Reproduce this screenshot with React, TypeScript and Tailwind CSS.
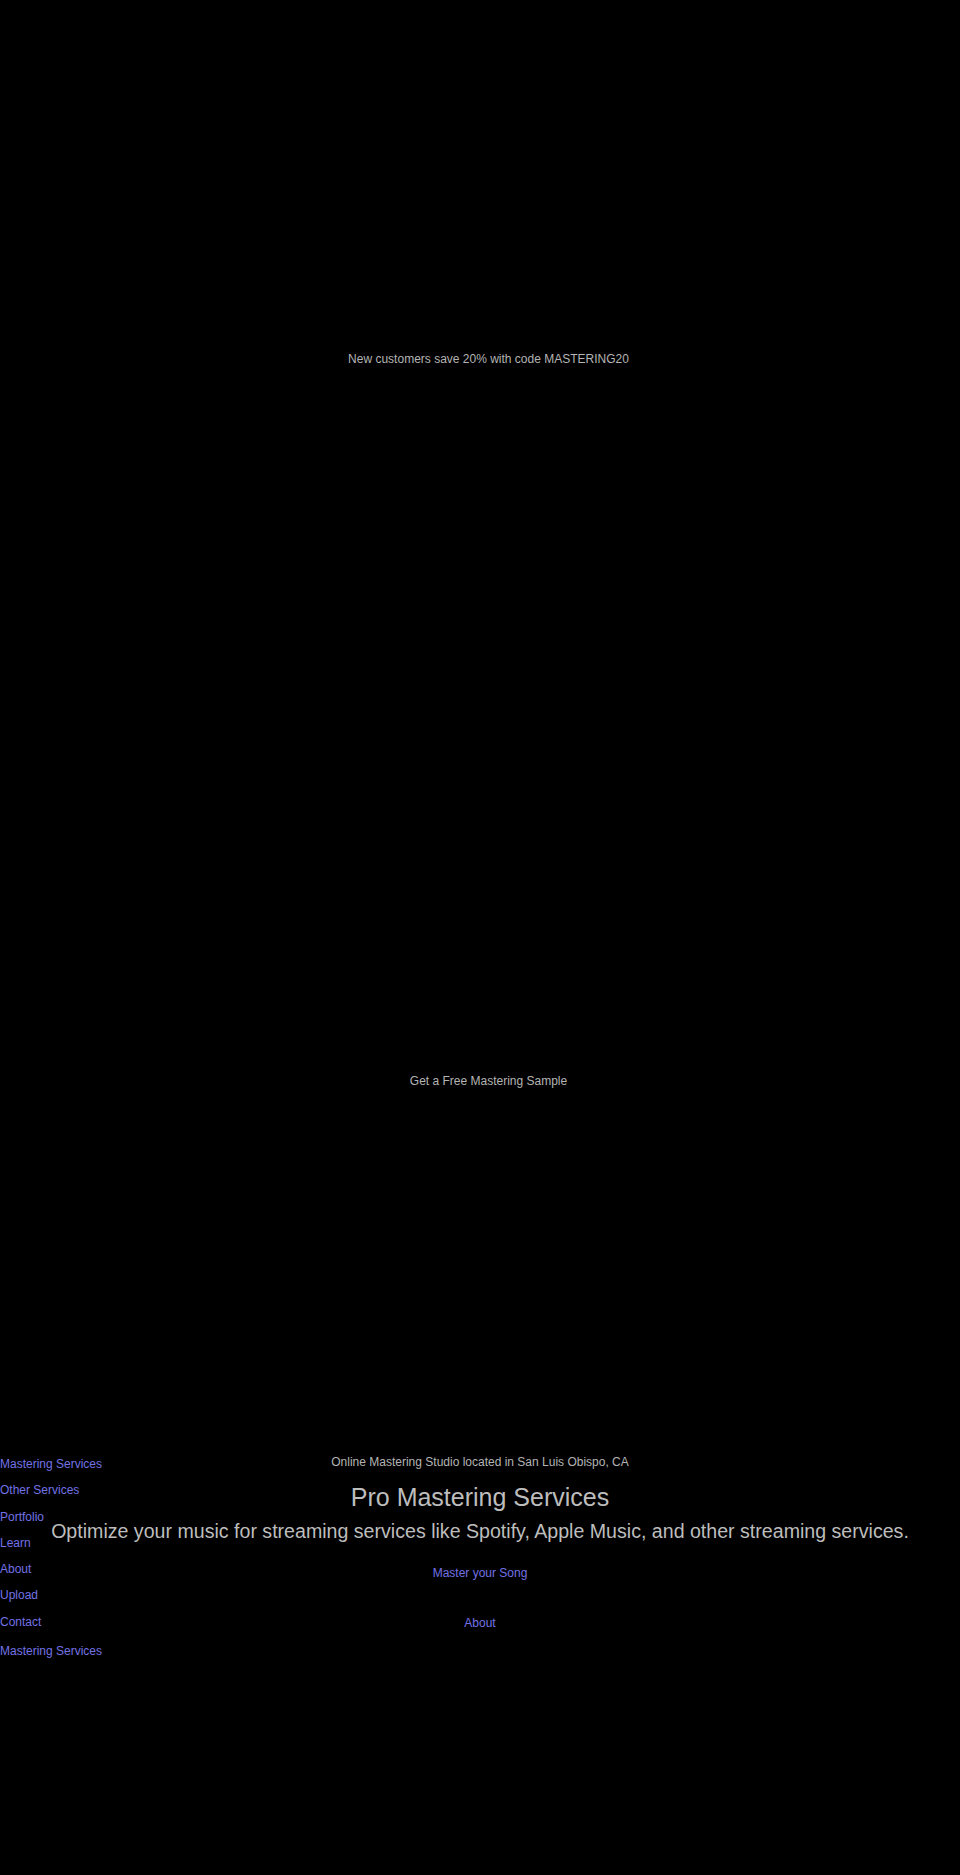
import React from "react";

const navItems = [
  "Mastering Services",
  "Other Services",
  "Portfolio",
  "Learn",
  "About",
  "Upload",
  "Contact",
];

export default function App() {
  return (
    <div
      className="w-[960px] min-h-[1875px] bg-black text-[#b4b4b4]"
      style={{ fontFamily: '"Liberation Sans", Arial, sans-serif' }}
    >
      <section className="h-[718px] pl-[17px] flex items-center justify-center">
        <p className="text-[12px] leading-[14px]">New customers save 20% with code MASTERING20</p>
      </section>
      <section className="h-[725px] pl-[17px] flex items-center justify-center">
        <p className="text-[12px] leading-[14px]">Get a Free Mastering Sample</p>
      </section>
      <section className="relative pt-[12px] pb-[200px] flex flex-col items-center text-center">
        <nav className="absolute left-0 top-[8px] flex flex-col text-[12px] leading-[26.3px] text-[#7272e6] text-left">
          {navItems.map((n) => (
            <a key={n} href="#">{n}</a>
          ))}
          <a href="#" className="mt-[3px]">Mastering Services</a>
        </nav>
        <p className="text-[12px] leading-[14px]">Online Mastering Studio located in San Luis Obispo, CA</p>
        <h1 className="mt-[14px] text-[25px] leading-[28px] text-[#bdbdbd]">Pro Mastering Services</h1>
        <p className="mt-[9px] text-[19.6px] leading-[22px] text-[#bdbdbd] whitespace-nowrap">
          Optimize your music for streaming services like Spotify, Apple Music, and other streaming services.
        </p>
        <a href="#" className="mt-[24px] text-[12px] leading-[14px] text-[#7272e6]">Master your Song</a>
        <a href="#" className="mt-[36px] text-[12px] leading-[14px] text-[#7272e6]">About</a>
      </section>
    </div>
  );
}
